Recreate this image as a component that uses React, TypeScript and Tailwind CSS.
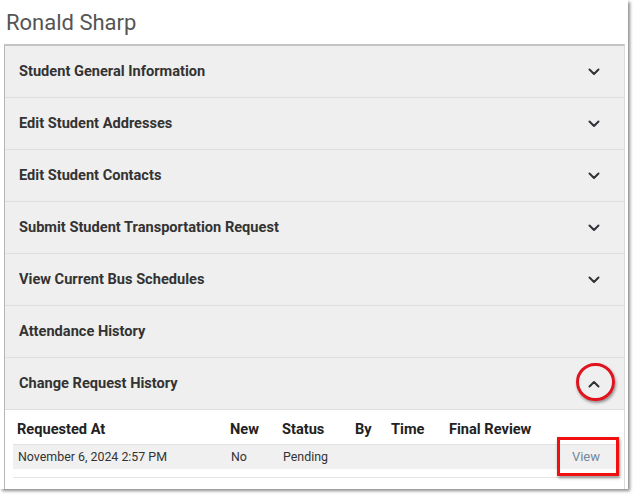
import React from "react";

const rows = [
  { label: "Student General Information", chev: "down" },
  { label: "Edit Student Addresses", chev: "down" },
  { label: "Edit Student Contacts", chev: "down" },
  { label: "Submit Student Transportation Request", chev: "down" },
  { label: "View Current Bus Schedules", chev: "down" },
  { label: "Attendance History", chev: "none" },
  { label: "Change Request History", chev: "up" },
];

function Chevron({ up }: { up?: boolean }) {
  return (
    <svg width="12" height="8" viewBox="0 0 12 8" className="block">
      <polyline
        points={up ? "1.5,6.5 6,2 10.5,6.5" : "1.5,1.5 6,6 10.5,1.5"}
        fill="none"
        stroke="#2f3338"
        strokeWidth="2"
        strokeLinecap="round"
        strokeLinejoin="round"
      />
    </svg>
  );
}

export default function App() {
  return (
    <div
      className="w-[636px] h-[499px] bg-white overflow-hidden"
      style={{ fontFamily: "Roboto, 'Liberation Sans', sans-serif" }}
    >
      <div className="relative w-[628px] h-[489px] bg-white shadow-[2px_2px_3px_rgba(0,0,0,0.45)] flex flex-col">
        <div className="h-[44px] pl-[6px] flex items-center text-[22px] text-[#555555] leading-none pt-[2px]">
          Ronald Sharp
        </div>
        <div className="flex-1 ml-[4px] mr-[3px] border-l border-l-[#b5b5b5] border-t-2 border-t-[#c4c4c4] border-r border-r-[#dcdcdc] flex flex-col">
          {rows.map((r) => (
            <div
              key={r.label}
              className="h-[52px] shrink-0 bg-[#efefef] border-b border-[#dedede] flex items-center justify-between pl-[14px] pr-[24px]"
            >
              <span className="text-[14.6px] font-bold text-[#333333]">{r.label}</span>
              {r.chev === "down" && <Chevron />}
              {r.chev === "up" && <Chevron up />}
            </div>
          ))}
          <div className="flex-1 bg-white flex flex-col">
            <div className="h-[34px] pl-[12px] pt-[5px] grid grid-cols-[213px_52px_73px_36px_58px_1fr] items-center text-[14.6px] font-bold text-[#222222]">
              <span>Requested At</span>
              <span>New</span>
              <span>Status</span>
              <span>By</span>
              <span>Time</span>
              <span>Final Review</span>
            </div>
            <div className="ml-[8px] mr-[4px] h-[25px] bg-[#f0f0f0] border-t border-[#e2e2e2] pl-[5px] grid grid-cols-[213px_52px_73px_36px_58px_1fr_auto] items-center text-[12.4px] text-[#333333]">
              <span>November 6, 2024 2:57 PM</span>
              <span>No</span>
              <span>Pending</span>
              <span></span>
              <span></span>
              <span></span>
              <span className="text-[#71879a] text-[13px] pr-[20px]">View</span>
            </div>
            <div className="ml-[8px] mr-[4px] mt-[8px] border-t border-[#e4e4e4]"></div>
          </div>
        </div>

        <div className="absolute left-[576px] top-[363px] w-[39px] h-[38px] rounded-full border-[3px] border-[#e0141e] shadow-[1px_2px_3px_rgba(0,0,0,0.4)]"></div>
        <div className="absolute left-[557px] top-[437px] w-[62px] h-[39px] border-[3px] border-[#f01010] shadow-[1px_2px_3px_rgba(0,0,0,0.4)]"></div>
      </div>
    </div>
  );
}
